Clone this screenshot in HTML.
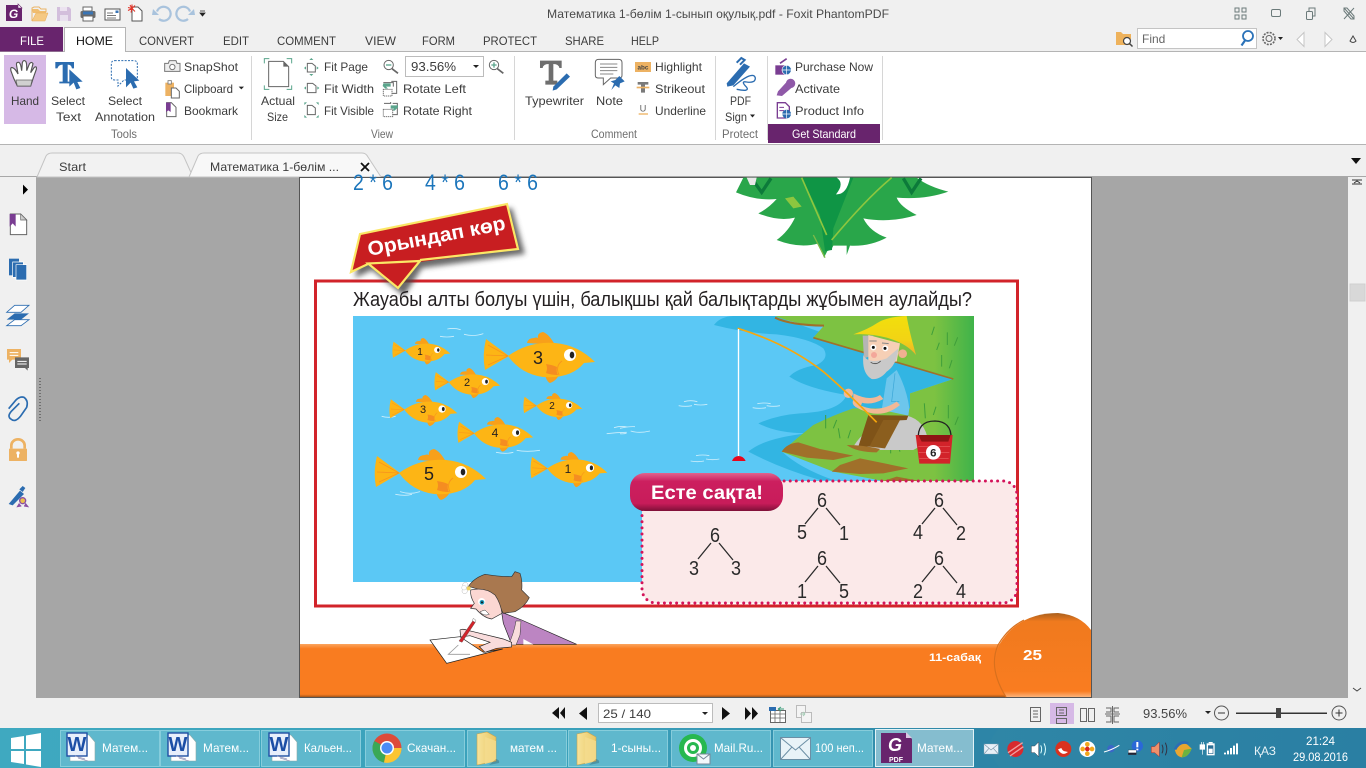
<!DOCTYPE html>
<html><head><meta charset="utf-8"><title>Foxit PhantomPDF</title>
<style>
html,body{margin:0;padding:0;width:1366px;height:768px;overflow:hidden;background:#f0f0f0}
svg{display:block;position:absolute;left:0;top:0}
text{font-family:"Liberation Sans","DejaVu Sans","Noto Sans CJK SC",sans-serif;font-size:12px;fill:#3c3c3c}
.c{text-anchor:middle}
.g{fill:#6e6e6e}
.tb{fill:#fff;font-size:12px}
.d{font-size:20.500px;fill:#2a2a2a}
.fn{fill:#231f20;text-anchor:middle;font-weight:400}
</style></head><body>
<svg width="1366" height="768" viewBox="0 0 1366 768" xmlns="http://www.w3.org/2000/svg">
<defs>
<linearGradient id="tbar" x1="0" x2="1" y1="0" y2="0"><stop offset="0" stop-color="#3fa9c0"/><stop offset=".45" stop-color="#3a9fba"/><stop offset=".72" stop-color="#2f86a6"/><stop offset="1" stop-color="#2a7fa3"/></linearGradient>
<linearGradient id="btn" x1="0" x2="0" y1="0" y2="1"><stop offset="0" stop-color="#e0648f"/><stop offset=".22" stop-color="#cc1f5f"/><stop offset=".8" stop-color="#c81c5a"/><stop offset="1" stop-color="#7e1038"/></linearGradient>
<linearGradient id="grass" x1="0" x2="1" y1="0" y2="0"><stop offset="0" stop-color="#7dc242"/><stop offset=".8" stop-color="#7dc242"/><stop offset="1" stop-color="#3fb34a"/></linearGradient>
<linearGradient id="foot" x1="0" x2="0" y1="0" y2="1"><stop offset="0" stop-color="#fba55f"/><stop offset=".09" stop-color="#f97c20"/><stop offset=".95" stop-color="#f97c20"/><stop offset="1" stop-color="#a5561a"/></linearGradient>
<linearGradient id="circ" x1="0" x2="0" y1="0" y2="1"><stop offset="0" stop-color="#a9601e"/><stop offset=".1" stop-color="#f07a1e"/><stop offset=".93" stop-color="#f97c20"/><stop offset="1" stop-color="#fbb27a"/></linearGradient>
<linearGradient id="hat" x1="0" x2="0" y1="0" y2="1"><stop offset="0" stop-color="#f2df0c"/><stop offset=".6" stop-color="#f2d414"/><stop offset="1" stop-color="#efb02b"/></linearGradient>
<linearGradient id="folder" x1="0" x2="1" y1="0" y2="0"><stop offset="0" stop-color="#f7e39b"/><stop offset="1" stop-color="#e9c765"/></linearGradient>
<filter id="sh" x="-20%" y="-20%" width="140%" height="140%"><feGaussianBlur stdDeviation="2.600"/></filter>
<g id="fish">
<path d="M26,24 L3,7 Q-1,23 2,38 Z" fill="#fdb515"/>
<path d="M25,24 L5,13 M25,24 L3,23 M25,24 L5,33" stroke="#f7941d" stroke-width=".8"/>
<path d="M44,11 Q45,6 51,6 Q53,5 55,6 Q54,1 60,0 Q66,2 72,13 Z" fill="#f8a01a"/>
<path d="M62,43 Q64,50 67,51 Q73,49 76,43 Z" fill="#f8a01a"/>
<path d="M25,24 Q46,9 72,11 Q95,13 112,30 L101,31 Q88,47 60,45 Q38,42 25,24 Z" fill="#fdb515"/>
<path d="M63,32 Q70,33 74,35 Q73,40 75,43 Q68,43 63,41 Q65,36 63,32 Z" fill="#f58d21"/>
<path d="M79,29 Q72,34 76,43" fill="none" stroke="#f7941d" stroke-width=".9"/>
<circle cx="87" cy="23" r="6" fill="#fff"/><ellipse cx="89" cy="23" rx="2.300" ry="3.400" fill="#222"/>
</g>
<g id="word"><path d="M3,3 h19 l6,7 v19 h-25 z" fill="#fff" stroke="#8aa" stroke-width=".6"/><rect x="0" y="1" width="20" height="23" fill="#e7eefb" stroke="#1e4fa3" stroke-width="1.400"/><text x="10" y="19" class="c" style="font-size:20px;font-weight:700;fill:#1c4ea6">W</text><path d="M8,24 l10,3 m-7,-1 l10,3" stroke="#99b" stroke-width=".7"/></g>
<g id="fold"><path d="M2,3 L12,1 L21,6 L21,30 L2,34 Z" fill="url(#folder)" stroke="#c9a44c" stroke-width=".6"/><path d="M10,6 L21,10 L21,30 L10,33 Z" fill="#f5dc8e" opacity=".8"/><path d="M21,28 q4,1 3,4 l-10,2" fill="#000" opacity=".2"/></g>
</defs>

<rect width="1366" height="768" fill="#f0f0f0"/>
<rect x="0" y="52" width="1366" height="92" fill="#fff"/>
<rect x="0" y="51" width="1366" height="1" fill="#b4b4b4"/>
<rect x="0" y="144" width="1366" height="1" fill="#b4b4b4"/>
<rect x="36" y="177" width="1312" height="521" fill="#a6a6a6"/>
<rect x="0" y="176" width="1366" height="1" fill="#a8a8a8"/>

<!-- QAT -->
<path d="M6,5 H18 L22,8.500 V21 H6 Z" fill="#68246d"/><path d="M18,4 l4,4 h-4z" fill="#fff" stroke="#68246d" stroke-width=".6"/>
<text x="13.500" y="18" class="c" style="font-size:12px;font-weight:700;font-style:italic;fill:#fff">G</text>
<path d="M32,9 h6 l2,2 h6 v2 h-13 z" fill="#f0bd6f"/><path d="M32,21 V8 l2,-1 h5 l2,2 h5 v3" fill="none" stroke="#eab466"/><path d="M32,21 l4,-8 h12 l-3,8 z" fill="#f5c983" stroke="#e6ac5b" stroke-width=".5"/>
<path d="M57,7 h12 l2,2 v12 h-14z" fill="#d3bfdc"/><rect x="60" y="7" width="7" height="4" fill="#ece3f0"/><rect x="60" y="15" width="8" height="6" fill="#e8e0ee"/>
<rect x="83" y="7" width="9" height="4" fill="#fff" stroke="#666"/><rect x="80.500" y="11" width="15" height="7" rx="1.500" fill="#6c6c6c"/><rect x="83" y="11.500" width="10" height="3" fill="#3a75b5"/><rect x="83" y="16" width="10" height="5" fill="#fff" stroke="#666"/>
<rect x="105" y="9" width="15" height="11" fill="#fff" stroke="#555"/><path d="M107,13 h6 M107,15.500 h9 M107,18 h9" stroke="#777"/><rect x="115.500" y="10.500" width="3" height="2.500" fill="#3a75b5"/>
<path d="M132,7 h6 l4,4 v10 h-10 z" fill="#fff" stroke="#555"/><path d="M132,8.500 l-4,-1 m4,1 l-2,-3.500 m2,3.500 l0,-4 m0,4 l3,-3 m-3,3 l-4,2 m4,-2 l-1,4 m1,-4 l3,3" stroke="#e1362b" stroke-width="1.100"/>
<path d="M157,11.500 A7,7 0 1 1 159,19" fill="none" stroke="#a9c3dd" stroke-width="2.200"/><path d="M153,9 l6,6 l-7,0z" fill="#a9c3dd"/>
<path d="M190,11.500 A7,7 0 1 0 188,19" fill="none" stroke="#a9c3dd" stroke-width="2.200"/><path d="M194,9 l-6,6 l7,0z" fill="#a9c3dd"/>
<path d="M200,11 h5 M200,13 h5 l-2.500,3z" stroke="#222" fill="#222" stroke-width=".8"/>

<text x="547" y="18" textLength="342" lengthAdjust="spacingAndGlyphs" style="fill:#4a4a4a">Математика 1-бөлім 1-сынып оқулық.pdf - Foxit PhantomPDF</text>
<g fill="none" stroke="#6b7a7a">
<path d="M1235,8 h4 v4 h-4z M1242,8 h4 v4 h-4z M1235,15 h4 v4 h-4z M1242,15 h4 v4 h-4z"/>
<rect x="1271.500" y="9.500" width="9" height="7" rx="1.500"/>
<rect x="1306.500" y="11.500" width="6" height="8" rx="1"/><path d="M1309,11 v-3 h6 v8 h-2"/>
<path d="M1344,8 l10,11 M1354,8 l-10,11 M1344,8 h3 l7,8 v3 h-3 l-7,-8z"/>
</g>

<!-- tabs -->
<rect x="0" y="27" width="63" height="24.500" fill="#68246d"/>
<text x="20" y="45" textLength="24" lengthAdjust="spacingAndGlyphs" style="fill:#fff">FILE</text>
<path d="M64.500,52 V27.500 H125.500 V52" fill="#fff" stroke="#b4b4b4"/><rect x="65" y="50" width="60" height="3" fill="#fff"/>
<text x="76" y="45" textLength="37" lengthAdjust="spacingAndGlyphs" style="fill:#111">HOME</text>
<text x="139" y="45" textLength="55" lengthAdjust="spacingAndGlyphs">CONVERT</text>
<text x="223" y="45" textLength="26" lengthAdjust="spacingAndGlyphs">EDIT</text>
<text x="277" y="45" textLength="59" lengthAdjust="spacingAndGlyphs">COMMENT</text>
<text x="365" y="45" textLength="31" lengthAdjust="spacingAndGlyphs">VIEW</text>
<text x="422" y="45" textLength="33" lengthAdjust="spacingAndGlyphs">FORM</text>
<text x="483" y="45" textLength="54" lengthAdjust="spacingAndGlyphs">PROTECT</text>
<text x="565" y="45" textLength="39" lengthAdjust="spacingAndGlyphs">SHARE</text>
<text x="631" y="45" textLength="28" lengthAdjust="spacingAndGlyphs">HELP</text>

<!-- find -->
<path d="M1116,32 h5 l2,2 h8 v5 h-15z" fill="#eeb25c"/><rect x="1116" y="34" width="14" height="11" fill="#eeb25c"/><circle cx="1127" cy="41" r="3.500" fill="#fff" stroke="#444" stroke-width="1.200"/><path d="M1129.500,43.500 l3,3" stroke="#444" stroke-width="1.500"/>
<rect x="1137.500" y="28.500" width="119" height="20" fill="#fff" stroke="#c4c4c4"/>
<text x="1142" y="43" style="fill:#666">Find</text>
<circle cx="1248" cy="36" r="5" fill="#fff" stroke="#2b72b8" stroke-width="1.800"/><path d="M1245,40.500 l-3.500,5" stroke="#2b72b8" stroke-width="2.200"/>
<circle cx="1269" cy="38.500" r="3" fill="none" stroke="#666"/><circle cx="1269" cy="38.500" r="6" fill="none" stroke="#666" stroke-width="1.600" stroke-dasharray="2 1.200"/>
<path d="M1278,37 h5 l-2.500,3z" fill="#222"/>
<path d="M1304,32.500 l-7,7 l7,7z" fill="#fff" stroke="#c6c6c6"/><path d="M1325,32.500 l7,7 l-7,7z" fill="#fff" stroke="#c6c6c6"/>
<path d="M1350,41 l3,-5 l3,5 q-3,3 -6,0z" fill="none" stroke="#444"/>

<g fill="#d6d6d6"><rect x="251" y="56" width="1" height="84"/><rect x="514" y="56" width="1" height="84"/><rect x="715" y="56" width="1" height="84"/><rect x="767" y="56" width="1" height="84"/><rect x="882" y="56" width="1" height="84"/></g>
<rect x="4" y="55" width="42" height="69" fill="#d6b9e6"/>

<g transform="scale(.33333)">
<path d="M52,258 Q40,235 33,213 Q30,200 38,203 Q46,206 54,222 L50,198 Q47,186 56,187 Q62,188 65,212 L67,188 Q70,178 77,184 Q81,188 80,212 L88,192 Q94,183 99,191 L92,218 L103,202 Q111,197 109,208 Q100,232 92,258 Z" fill="#fff" stroke="#555" stroke-width="3.500"/>
<path d="M52,258 H92 L96,240 H48 Z" fill="#d0d0d0" stroke="#666" stroke-width="2"/>
<path d="M166,186 H222 V205 H216 Q214,194 203,194 V245 H212 V250 H178 V245 H188 V194 Q176,194 172,205 H166 Z" fill="#2b6cb0"/>
<path d="M208,208 L248,245 L232,246 L241,264 L229,268 L221,248 L208,260 Z" fill="#2b6cb0"/>
<path d="M344,182 H402 Q412,182 412,192 V232 Q412,240 402,240 H372 L354,258 V240 H344 Q334,240 334,232 V192 Q334,182 344,182 Z" fill="#fff" stroke="#2b6cb0" stroke-width="3" stroke-dasharray="6 4"/>
<path d="M378,204 L418,242 L402,244 L412,262 L400,266 L392,248 L378,262 Z" fill="#2b6cb0"/>
<path d="M494,190 H505 L508,182 H528 L531,190 H540 V214 H494 Z" fill="#eee" stroke="#777" stroke-width="3"/><circle cx="517" cy="201" r="8" fill="#fff" stroke="#777" stroke-width="3"/>
<rect x="496" y="248" width="26" height="40" fill="#edb263"/><rect x="504" y="242" width="10" height="10" fill="#fff" stroke="#777" stroke-width="2.500"/><path d="M514,264 H528 L538,274 V294 H514 Z" fill="#fff" stroke="#666" stroke-width="3"/>
<path d="M500,308 H514 L528,322 V350 H500 Z" fill="#fff" stroke="#666" stroke-width="3"/><path d="M498,308 H512 V336 L505,331 L498,336 Z" fill="#7a3d92"/>
<path d="M716,260 h16 l-8,8z" fill="#222"/>
<path d="M806,184 H850 L866,200 V260 H806 Z" fill="#fff" stroke="#666" stroke-width="3"/><path d="M850,184 L866,200 H850 Z" fill="#666"/>
<path d="M793,190 V176 H808 M860,176 H875 V190 M793,256 V268 H808 M860,268 H875 V256" fill="none" stroke="#5aa58c" stroke-width="3"/>
<path d="M922,190 H936 L946,198 V216 H922 Z" fill="#fff" stroke="#666" stroke-width="3"/><path d="M928,180 l6,-6 l6,6z M928,222 l6,6 l6,-6z M912,204 l6,-5 v10z M950,199 l6,5 l-6,5z" fill="#5aa58c"/>
<path d="M922,250 H938 L948,258 V278 H922 Z" fill="#fff" stroke="#666" stroke-width="3"/><path d="M912,264 l6,-5 v10z M952,259 l6,5 l-6,5z" fill="#5aa58c"/>
<path d="M922,316 H936 L946,324 V344 H922 Z" fill="#fff" stroke="#666" stroke-width="3"/><path d="M913,307 h8 l-8,8z M956,307 v8 l-8,-8z M913,353 v-8 l8,8z M956,353 h-8 l8,-8z" fill="#5aa58c"/>
<circle cx="1166" cy="195" r="14" fill="#fff" stroke="#666" stroke-width="3"/><rect x="1158" y="193" width="16" height="4" fill="#5aa58c"/><path d="M1176,206 L1194,220" stroke="#666" stroke-width="5"/>
<circle cx="1482" cy="195" r="14" fill="#fff" stroke="#666" stroke-width="3"/><path d="M1474,195 h16 M1482,187 v16" stroke="#5aa58c" stroke-width="4"/><path d="M1492,206 L1510,220" stroke="#666" stroke-width="5"/>
<path d="M1150,248 H1180 V260 M1170,280 h20 v-36 h-16" fill="none" stroke="#666" stroke-width="3"/><path d="M1150,250 h22 v10 h-14 l6,6 h-8 l-8,-8z" fill="#5aa58c"/><path d="M1150,268 h26 v20 h-26z" fill="#fff" stroke="#777" stroke-width="3" stroke-dasharray="4 2"/>
<path d="M1152,310 h20 v-4 M1178,344 h14 v-34 h-14" fill="none" stroke="#666" stroke-width="3"/><path d="M1194,316 h-22 v10 h10 l-6,6 h8 l10,-10z" fill="#5aa58c"/><path d="M1150,328 h28 v22 h-28z" fill="#fff" stroke="#777" stroke-width="3" stroke-dasharray="4 2"/>
</g>
<rect x="405.500" y="56.500" width="78" height="20" fill="#fff" stroke="#bcbcbc"/>
<path d="M473,65 h6 l-3,3z" fill="#222"/>
<text x="411" y="71" textLength="45" lengthAdjust="spacingAndGlyphs" style="font-size:13px">93.56%</text>

<!-- ribbon labels -->
<text x="11" y="105" textLength="28" lengthAdjust="spacingAndGlyphs">Hand</text>
<text x="51" y="105" textLength="34" lengthAdjust="spacingAndGlyphs">Select</text><text x="56" y="121" textLength="25" lengthAdjust="spacingAndGlyphs">Text</text>
<text x="108" y="105" textLength="34" lengthAdjust="spacingAndGlyphs">Select</text><text x="95" y="121" textLength="60" lengthAdjust="spacingAndGlyphs">Annotation</text>
<text x="184" y="71" textLength="54" lengthAdjust="spacingAndGlyphs">SnapShot</text>
<text x="184" y="93" textLength="49" lengthAdjust="spacingAndGlyphs">Clipboard</text>
<text x="184" y="115" textLength="54" lengthAdjust="spacingAndGlyphs">Bookmark</text>
<text x="111" y="138" textLength="26" lengthAdjust="spacingAndGlyphs" class="g">Tools</text>
<text x="261" y="105" textLength="34" lengthAdjust="spacingAndGlyphs">Actual</text><text x="267" y="121" textLength="21" lengthAdjust="spacingAndGlyphs">Size</text>
<text x="324" y="71" textLength="44" lengthAdjust="spacingAndGlyphs">Fit Page</text>
<text x="324" y="93" textLength="50" lengthAdjust="spacingAndGlyphs">Fit Width</text>
<text x="324" y="115" textLength="50" lengthAdjust="spacingAndGlyphs">Fit Visible</text>
<text x="403" y="93" textLength="63" lengthAdjust="spacingAndGlyphs">Rotate Left</text>
<text x="403" y="115" textLength="69" lengthAdjust="spacingAndGlyphs">Rotate Right</text>
<text x="371" y="138" textLength="22" lengthAdjust="spacingAndGlyphs" class="g">View</text>
<text x="525" y="105" textLength="59" lengthAdjust="spacingAndGlyphs">Typewriter</text>
<text x="596" y="105" textLength="27" lengthAdjust="spacingAndGlyphs">Note</text>
<text x="655" y="71" textLength="47" lengthAdjust="spacingAndGlyphs">Highlight</text>
<text x="655" y="93" textLength="50" lengthAdjust="spacingAndGlyphs">Strikeout</text>
<text x="655" y="115" textLength="51" lengthAdjust="spacingAndGlyphs">Underline</text>
<text x="591" y="138" textLength="46" lengthAdjust="spacingAndGlyphs" class="g">Comment</text>
<text x="730" y="105" textLength="21" lengthAdjust="spacingAndGlyphs">PDF</text><text x="725" y="121" textLength="22" lengthAdjust="spacingAndGlyphs">Sign</text>
<path d="M750,114.500 h5 l-2.500,3z" fill="#222"/>
<text x="722" y="138" textLength="36" lengthAdjust="spacingAndGlyphs" class="g">Protect</text>
<text x="795" y="71" textLength="78" lengthAdjust="spacingAndGlyphs">Purchase Now</text>
<text x="795" y="93" textLength="45" lengthAdjust="spacingAndGlyphs">Activate</text>
<text x="795" y="115" textLength="69" lengthAdjust="spacingAndGlyphs">Product Info</text>
<rect x="768" y="124" width="112" height="19" fill="#68246d"/>
<text x="792" y="138" textLength="64" lengthAdjust="spacingAndGlyphs" style="fill:#fff">Get Standard</text>

<g transform="translate(520,50) scale(.33333)">
<path d="M60,32 H125 V54 H118 Q116,42 100,42 V92 H112 V104 H76 V92 H86 V42 Q70,42 68,54 H60 Z" fill="#6e6e6e"/>
<path d="M100,110 L140,70 L150,80 L110,118 L98,122 Z" fill="#2b6cb0"/>
<path d="M236,28 H296 Q306,28 306,38 V76 Q306,84 296,84 H272 L250,104 V84 H236 Q226,84 226,76 V38 Q226,28 236,28 Z" fill="#fff" stroke="#666" stroke-width="3"/>
<path d="M240,42 H292 M240,52 H292 M240,62 H292 M240,72 H280" stroke="#888" stroke-width="3"/>
<path d="M298,78 L314,94 L300,100 L298,114 L286,106 L274,120 L282,100 L272,94 L286,90 Z" fill="#2b6cb0"/>
<rect x="345" y="36" width="48" height="30" fill="#edb263"/><text x="369" y="58" class="c" style="font-size:19px;font-weight:700;fill:#444">abc</text>
<path d="M353,96 H385 V104 H375 V128 H363 V104 H353 Z" fill="#7a7a7a"/><rect x="350" y="110" width="38" height="5" fill="#edb263"/>
<text x="369" y="184" class="c" style="font-size:28px;fill:#666">U</text><rect x="356" y="190" width="28" height="4" fill="#edb263"/>
<path d="M620,100 L672,40 L690,50 L640,106 L622,110 Z" fill="#2b6cb0"/><path d="M650,38 L664,24 L674,30 L660,44" fill="none" stroke="#2b6cb0" stroke-width="6"/>
<path d="M640,110 Q700,60 706,84 Q706,100 680,96 Q660,92 680,112 Q690,126 650,118" fill="none" stroke="#2b6cb0" stroke-width="4"/>
<path d="M766,46 h40 v28 h-40z" fill="#7a3d92"/><path d="M780,40 L800,26" stroke="#7a3d92" stroke-width="5"/><circle cx="800" cy="60" r="14" fill="#2b6cb0" stroke="#fff" stroke-width="2"/><path d="M786,60 h28 M800,46 v28" stroke="#fff" stroke-width="2"/>
<path d="M770,136 l4,-12 l24,-26 a14,14 0 1 1 16,16 l-28,24z" fill="#8f59a8"/>
<path d="M772,158 h24 l12,12 v12 h-10 v22 h-26z" fill="#fff" stroke="#7a3d92" stroke-width="4"/><path d="M778,172 h14 M778,182 h14" stroke="#7a3d92" stroke-width="3"/><circle cx="800" cy="192" r="13" fill="#2b6cb0"/><path d="M787,192 h26 M800,179 v26" stroke="#fff" stroke-width="2"/>
</g>

<!-- doc tabs -->
<path d="M37,177 L46,156 Q48,153 52,153 H178 Q182,153 184,157 L193,177 Z" fill="#f2f2f2" stroke="#c4c4c4"/>
<path d="M189,177 L198,156 Q200,153 204,153 H362 Q366,153 368,157 L381,177 Z" fill="#f8f8f8" stroke="#c4c4c4"/>
<text x="59" y="171" textLength="27" lengthAdjust="spacingAndGlyphs">Start</text>
<text x="210" y="171" textLength="129" lengthAdjust="spacingAndGlyphs">Математика 1-бөлім ...</text>
<path d="M361,163 l8,8 M369,163 l-8,8" stroke="#111" stroke-width="1.800"/>
<path d="M1351,158 h10 l-5,6z" fill="#111"/>

<!-- left icons -->
<g transform="translate(0,170) scale(.33333)">
<path d="M69,44 L84,59 L69,74 Z" fill="#000"/>
<path d="M31,132 H62 L80,150 V194 H31 Z" fill="#fff" stroke="#666" stroke-width="3"/><path d="M62,132 L80,150 H62 Z" fill="#ccc" stroke="#666" stroke-width="2"/><path d="M29,132 H47 V170 L38,160 L29,170 Z" fill="#7a3d92"/>
<path d="M27,266 h30 v50 h-30z" fill="#2b6cb0"/><path d="M38,276 h32 v46 h-32z" fill="#2b6cb0" stroke="#fff" stroke-width="2"/><path d="M48,284 h32 v46 h-32z" fill="#2b6cb0" stroke="#fff" stroke-width="2"/>
<path d="M20,427 L44,406 H87 L63,427 Z" fill="#fff" stroke="#2b6cb0" stroke-width="2.500"/>
<path d="M20,449 L44,430 H87 L63,449 Z" fill="#2b6cb0"/>
<path d="M20,467 L44,449 H87 L63,467 Z" fill="#fff" stroke="#2b6cb0" stroke-width="2.500"/>
<path d="M21,537 h42 v32 h-26 l-10,10 v-10 h-6z" fill="#edb263"/><path d="M29,548 h26 M29,556 h26" stroke="#fff" stroke-width="3"/>
<path d="M45,562 h42 v32 h-4 v8 l-8,-8 h-30z" fill="#666"/><path d="M52,574 h28 M52,582 h28" stroke="#fff" stroke-width="3"/>
<path d="M58,700 L34,724 Q20,740 34,748 Q46,758 62,738 L80,712 Q86,692 72,682 Q60,678 48,690 L26,716" fill="none" stroke="#2b6cb0" stroke-width="5"/>
<path d="M34,836 V826 a20,18 0 0 1 40,0 V836" fill="none" stroke="#edb263" stroke-width="8"/><rect x="27" y="836" width="54" height="37" rx="2" fill="#edb263"/><circle cx="54" cy="849" r="5" fill="#fff"/><rect x="51" y="850" width="6" height="13" fill="#fff"/>
<path d="M26,1002 L60,962 L72,972 L38,1006 Z" fill="#2b6cb0"/><path d="M58,958 L68,948 L76,954 L68,966z" fill="#2b6cb0"/>
<circle cx="68" cy="992" r="9" fill="#edc04a" stroke="#8a4fa3" stroke-width="4"/><path d="M58,1000 L52,1010 L64,1008 M76,1000 L84,1010 L72,1008" fill="#8a4fa3" stroke="#8a4fa3" stroke-width="3"/>
</g>
<path d="M40,378 v44" stroke="#6f6f6f" stroke-width="2" stroke-dasharray="1 2"/>

<!-- scrollbar -->
<rect x="1348" y="177" width="18" height="521" fill="#f0f0f0"/>
<path d="M1352,180 h10 M1354,183 l3,-2 l3,2 M1352,184 h10" stroke="#333" fill="none"/>
<rect x="1350" y="284" width="15" height="17" fill="#d8d8d8" stroke="#cfcfcf"/>
<path d="M1353,688 l4,3 l4,-3" fill="none" stroke="#444"/>

<!-- PAGE -->
<rect x="299.500" y="177.500" width="792" height="520" fill="#fff" stroke="#555"/>
<text x="353" y="190" textLength="40" lengthAdjust="spacingAndGlyphs" style="font-size:22px;fill:#1b75bb">2 * 6</text>
<text x="425" y="190" textLength="40" lengthAdjust="spacingAndGlyphs" style="font-size:22px;fill:#1b75bb">4 * 6</text>
<text x="498" y="190" textLength="40" lengthAdjust="spacingAndGlyphs" style="font-size:22px;fill:#1b75bb">6 * 6</text>

<!-- leaves -->
<g transform="translate(620,175) scale(.33333)">
<path d="M370,8 L348,52 Q410,78 470,72 Q445,100 415,115 Q475,140 525,128 Q505,170 470,195 Q540,222 595,205 L612,248 L622,228 Q635,225 640,212 L680,212 L680,240 L690,212 Q750,215 800,188 Q750,170 730,130 Q810,145 890,120 Q840,95 830,68 Q915,75 985,50 Q925,35 890,8 Z" fill="#29a64a"/>
<path d="M545,8 L600,120 L615,228 L636,225 L640,160 L700,8 Z" fill="#0f9545"/>
<path d="M650,8 Q675,25 648,58 Q680,60 690,8 Z" fill="#fff"/>
<path d="M395,10 l30,42 l28,-42 M850,10 l25,42 l28,-42" fill="none" stroke="#0c7a3a" stroke-width="10"/>
<path d="M545,8 L620,180 M815,8 Q740,70 635,195" fill="none" stroke="#8dc63f" stroke-width="5"/>
<path d="M495,70 L520,100 L545,95 L520,65 Z" fill="#8dc63f"/>
<path d="M615,248 L580,180" stroke="#7dba48" stroke-width="4"/>
<path d="M380,8 h30 l-5,22 h-15z" fill="#e8e8e8"/>
</g>

<rect x="315.500" y="281" width="702" height="325" fill="none" stroke="#d2232a" stroke-width="3"/>

<!-- tag -->
<path d="M364,238 L512,208 L525,254 L422,268 L404,296 L372,270 L355,278 Z" fill="#444" opacity=".8" filter="url(#sh)"/>
<path d="M360,234 L507,204 L518,249 L420,262 L398,288 L368,264 L351,272 Z" fill="#c81e21"/>
<path d="M368,264 L351,272 L360,234 L507,204 L518,249 L420,260" fill="none" stroke="#fbe766" stroke-width="2.200"/>
<path d="M368,263.500 L420,261 L398,288 Z" fill="#c81e21" stroke="#fbe766" stroke-width="2.200"/>
<text transform="translate(369,256) rotate(-11)" textLength="140" lengthAdjust="spacingAndGlyphs" style="font-size:20px;font-weight:700;fill:#fff">Орындап көр</text>

<text x="353" y="306" textLength="619" lengthAdjust="spacingAndGlyphs" style="font-size:20.500px;fill:#231f20">Жауабы алты болуы үшін, балықшы қай балықтарды жұбымен аулайды?</text>

<rect x="353" y="316" width="621" height="266" fill="#5bc8f5"/>
<g transform="translate(620,175) scale(.33333)">
<path d="M282,450 Q300,425 340,423 H465 L1000,612 L870,655 L870,720 L640,760 L560,800 L486,830 Q540,880 640,915 L600,915 Q480,880 385,830 Q430,790 560,775 Q470,775 415,745 Q470,720 540,715 Q660,710 680,660 Q560,640 508,605 Q530,580 590,570 Q630,550 610,520 Q570,490 470,478 Q380,475 282,450 Z" fill="#32b5e3"/>
<path d="M465,423 H1062 V918 H790 Q720,905 640,890 L485,830 Q530,790 580,750 Q640,720 700,700 L870,700 L870,655 L1000,612 L580,488 L612,452 Q530,450 465,423 Z" fill="url(#grass)"/>
<path d="M465,428 Q510,450 612,452" fill="none" stroke="#a0702a" stroke-width="6"/>
<path d="M580,488 L1000,612" stroke="#a0702a" stroke-width="5"/>
<path d="M485,830 Q500,805 535,802 L600,822 L700,842 L640,855 L560,848 Z" fill="#a0702a"/>
<path d="M635,890 L660,870 L720,850 L865,880 L790,895 L720,897 Z" fill="#a0702a"/>
<path d="M790,918 L830,905 L900,918 Z" fill="#a0702a"/>
<g stroke="#3f9e3a" stroke-width="3" fill="none"><path d="M935,480 l8,-25 M950,525 l8,-22 M982,510 l0,-38 M1003,512 l10,-25 M965,575 l0,-35 M988,580 l8,-25 M617,760 l0,-40 M640,760 l10,-25 M660,790 l-5,-30 M684,790 l8,-25 M812,835 l0,-30 M840,830 l-8,-25 M916,730 l-3,-45 M940,720 l8,-25 M985,730 l0,-40 M1005,750 l10,-25"/></g>
<path d="M700,815 Q745,740 860,722 Q915,735 925,800 L880,825 L780,825 Z" fill="#c9c9c9"/>
<path d="M745,720 L865,722 L860,735 L800,738 L760,815 L715,815 Z" fill="#7f5318"/>
<path d="M790,735 L840,735 L795,820 L748,815 Z" fill="#8b5e1e"/>
<path d="M680,810 Q730,810 780,822 L770,832 Q710,832 680,810Z" fill="#a0702a"/>
<path d="M800,610 L830,585 Q860,640 868,700 L865,722 L785,705 Z" fill="#6dc6ec"/>
<path d="M825,595 L815,680 L838,680" fill="none" stroke="#3aa5d6" stroke-width="2"/>
<path d="M700,655 Q750,680 780,660 L790,672 Q740,700 700,670 Z" fill="#f2b896"/>
<path d="M710,685 Q770,720 830,680 L840,690 Q780,740 705,695 Z" fill="#f2b896"/>
<circle cx="685" cy="655" r="14" fill="#f2b896"/><circle cx="712" cy="682" r="14" fill="#f2b896"/>
<circle cx="848" cy="536" r="13" fill="#f0b090"/>
<path d="M728,482 H760 V540 L732,550 Z" fill="#b5b5b5"/>
<path d="M745,480 L840,505 L830,560 L745,560 Z" fill="#f6cfb5"/>
<path d="M730,540 Q745,570 800,550 L835,520 Q830,570 800,590 Q780,615 755,612 Q725,595 730,540 Z" fill="#c9c9c9"/>
<path d="M752,562 Q768,572 782,558" fill="none" stroke="#444" stroke-width="2.500"/>
<circle cx="762" cy="540" r="9" fill="#f3a79a"/>
<circle cx="760" cy="517" r="9" fill="#fff"/><circle cx="760" cy="517" r="4.500" fill="#111"/><circle cx="796" cy="520" r="9" fill="#fff"/><circle cx="795" cy="520" r="4.500" fill="#111"/>
<path d="M748,498 l22,0 M786,504 l20,2" stroke="#888" stroke-width="3"/>
<path d="M700,478 Q745,462 770,445 Q800,425 860,423 Q868,470 888,540 Q860,505 800,488 Q750,475 700,478 Z" fill="url(#hat)"/>
<path d="M353,460 Q500,505 610,590 Q680,650 770,742" fill="none" stroke="#f7a70c" stroke-width="5"/>
<rect x="353.500" y="462" width="4" height="383" fill="#fff"/>
<path d="M336,858 Q342,843 356,843 Q370,843 377,858 Z" fill="#e8061c"/>
<path d="M895,796 Q890,738 945,738 Q995,740 993,790" fill="none" stroke="#222" stroke-width="4"/>
<path d="M887,780 H998 L990,866 H898 Z" fill="#d2232a"/>
<path d="M895,780 H992 L985,800 H905 Z" fill="#8e1414"/>
<path d="M895,815 H990 M896,832 H988 M898,850 H986" stroke="#e86060" stroke-width="2"/>
<circle cx="940" cy="832" r="22" fill="#fff"/>
<text x="940" y="844" class="c" style="font-size:34px;font-weight:700;fill:#222">6</text>
<g fill="none" stroke="#cdeefb" stroke-width="2.500"><path d="M192,680 q20,-6 40,0 M176,692 q20,4 40,0 M222,688 q20,4 40,0 M412,686 q20,-4 40,0 M398,698 q20,4 40,0 M440,692 q20,4 40,0 M0,760 q25,-6 45,-5 M0,776 q10,2 20,-2 M32,768 q25,8 58,0 M228,842 q20,-4 40,0 M212,858 q20,4 40,0 M258,852 q20,4 40,0"/></g>
</g>
<g transform="translate(300,175) scale(.33333)" fill="none" stroke="#cdeefb" stroke-width="2.500">
<path d="M442,462 q20,-4 40,2 M420,484 q20,4 42,0 M492,478 q30,8 58,-2 M245,724 q20,6 42,0 M588,832 q30,6 52,0 M650,826 q30,6 70,0 M942,758 q20,-6 40,-2 M920,776 q30,-4 60,-4 M300,950 q30,10 60,0 M286,958 q30,6 50,0"/>
</g>

<use href="#fish" transform="translate(483,332)"/>
<use href="#fish" transform="translate(392,338) scale(.52)"/>
<use href="#fish" transform="translate(434,368) scale(.59)"/>
<use href="#fish" transform="translate(389,395) scale(.61)"/>
<use href="#fish" transform="translate(523,393) scale(.53)"/>
<use href="#fish" transform="translate(457,417) scale(.68)"/>
<use href="#fish" transform="translate(374,449)"/>
<use href="#fish" transform="translate(530,452) scale(.69)"/>
<text x="538" y="364" class="fn" style="font-size:18px">3</text>
<text x="420" y="355" class="fn" style="font-size:10px">1</text>
<text x="467" y="386" class="fn" style="font-size:11px">2</text>
<text x="423" y="413" class="fn" style="font-size:11px">3</text>
<text x="552" y="409" class="fn" style="font-size:10px">2</text>
<text x="495" y="437" class="fn" style="font-size:12px">4</text>
<text x="429" y="480" class="fn" style="font-size:18px">5</text>
<text x="568" y="473" class="fn" style="font-size:12px">1</text>

<!-- pink box -->
<rect x="642" y="481" width="375" height="122" rx="14" fill="#fbe9e9"/>
<rect x="642" y="481" width="375" height="122" rx="14" fill="none" stroke="#d4145a" stroke-width="3" stroke-linecap="round" stroke-dasharray="0 6.100"/>
<rect x="630" y="473" width="153" height="38" rx="15" fill="url(#btn)"/>
<text x="651" y="499" textLength="112" lengthAdjust="spacingAndGlyphs" style="font-size:19px;font-weight:700;fill:#fff">Есте сақта!</text>

<g stroke="#2a2a2a" stroke-width="1.300" fill="none">
<path d="M711,543 L698,559 M719,543 L733,560"/>
<path d="M818,508 L805,524 M826,508 L840,525"/>
<path d="M935,508 L922,524 M943,508 L957,525"/>
<path d="M818,566 L805,582 M826,566 L840,583"/>
<path d="M935,566 L922,582 M943,566 L957,583"/>
</g>
<text x="710" y="542" textLength="10" lengthAdjust="spacingAndGlyphs" class="d">6</text><text x="689" y="575" textLength="10" lengthAdjust="spacingAndGlyphs" class="d">3</text><text x="731" y="575" textLength="10" lengthAdjust="spacingAndGlyphs" class="d">3</text>
<text x="817" y="507" textLength="10" lengthAdjust="spacingAndGlyphs" class="d">6</text><text x="797" y="539" textLength="10" lengthAdjust="spacingAndGlyphs" class="d">5</text><text x="839" y="540" textLength="10" lengthAdjust="spacingAndGlyphs" class="d">1</text>
<text x="934" y="507" textLength="10" lengthAdjust="spacingAndGlyphs" class="d">6</text><text x="913" y="539" textLength="10" lengthAdjust="spacingAndGlyphs" class="d">4</text><text x="956" y="540" textLength="10" lengthAdjust="spacingAndGlyphs" class="d">2</text>
<text x="817" y="565" textLength="10" lengthAdjust="spacingAndGlyphs" class="d">6</text><text x="797" y="598" textLength="10" lengthAdjust="spacingAndGlyphs" class="d">1</text><text x="839" y="598" textLength="10" lengthAdjust="spacingAndGlyphs" class="d">5</text>
<text x="934" y="565" textLength="10" lengthAdjust="spacingAndGlyphs" class="d">6</text><text x="913" y="598" textLength="10" lengthAdjust="spacingAndGlyphs" class="d">2</text><text x="956" y="598" textLength="10" lengthAdjust="spacingAndGlyphs" class="d">4</text>

<!-- footer -->
<rect x="300" y="644" width="791" height="53" fill="url(#foot)"/>
<path d="M1006,697 Q990,668 999,645 Q1018,613 1058,613 Q1080,615 1091,630 V697 Z" fill="url(#circ)"/>
<path d="M1006,697 Q988,668 998,645 Q1008,628 1024,620" fill="none" stroke="#d8701d" stroke-width="1.200"/>
<text x="929" y="661" textLength="52" lengthAdjust="spacingAndGlyphs" style="font-size:11px;font-weight:700;fill:#fff">11-сабақ</text>
<text x="1023" y="660" textLength="19" lengthAdjust="spacingAndGlyphs" style="font-size:15px;font-weight:700;fill:#fff">25</text>

<!-- girl -->
<g transform="translate(440,565) scale(.33333)">
<path d="M185,142 L190,175 L215,238 L410,238 L245,165 Z" fill="#bc85c2" stroke="#222" stroke-width="2"/>
<path d="M250,222 L280,238 H250 Z" fill="#fff"/>
<path d="M228,168 L243,168 L240,210 L228,240 L205,240 Q222,205 228,168 Z" fill="#f9dcdc" stroke="#333" stroke-width="1.500"/>
<path d="M-30,225 L20,295 L188,252 L130,262 L60,215 Z" fill="#fff" stroke="#222" stroke-width="2"/>
<path d="M55,240 L25,268 H90" fill="none" stroke="#999" stroke-width="2.500"/>
<path d="M60,195 Q68,190 82,196 L100,200 L190,222 L215,232 V246 L170,250 L135,262 L118,245 L150,232 L90,212 L62,216 Z" fill="#f9dcdc" stroke="#222" stroke-width="2"/>
<path d="M100,165 L106,172 L66,232 L57,228 Z" fill="#d2232a" stroke="#444" stroke-width="1"/><path d="M100,160 l8,6 l-3,6 l-8,-5z" fill="#fff" stroke="#444" stroke-width="1"/>
<path d="M85,65 Q100,40 135,28 Q175,35 215,35 L225,20 L240,25 Q248,50 245,75 L268,98 Q255,125 225,140 L190,145 L165,100 Q120,70 85,65 Z" fill="#a9784f" stroke="#333" stroke-width="2"/>
<path d="M92,75 Q135,65 165,90 Q182,115 186,145 L155,162 Q130,158 108,132 L92,130 L103,115 Q90,95 92,75 Z" fill="#fbd7d2" stroke="#333" stroke-width="2"/>
<circle cx="125" cy="110" r="11" fill="#fff"/><circle cx="126" cy="112" r="7" fill="#1e97b8"/><circle cx="126" cy="112" r="3" fill="#111"/>
<path d="M120,140 Q130,155 148,148 L135,135 Z" fill="#fff" stroke="#333" stroke-width="1.500"/>
<circle cx="76" cy="60" r="8" fill="#fff" stroke="#999"/><circle cx="74" cy="78" r="8" fill="#fff" stroke="#999"/><circle cx="86" cy="70" r="6" fill="#f0d15c"/><circle cx="72" cy="68" r="7" fill="#fff" stroke="#aaa"/>
</g>

<!-- status bar -->
<g fill="#111">
<path d="M559,707 v12 l-7,-6z M565,707 v12 l-5,-6z"/>
<path d="M587,707 v13 l-8,-6.500z"/>
<path d="M722,707 v13 l8,-6.500z"/>
<path d="M745,707 v13 l6,-6.500z M752,707 v13 l6,-6.500z"/>
</g>
<rect x="598.500" y="703.500" width="114" height="19" fill="#fff" stroke="#bcbcbc"/>
<text x="603" y="718" textLength="48" lengthAdjust="spacingAndGlyphs">25 / 140</text>
<path d="M702,712 h6 l-3,3z" fill="#222"/>
<g stroke="#666" fill="#fff"><rect x="770.500" y="710.500" width="15" height="12"/><path d="M771,714 h14 M771,718 h14 M775,711 v11 M780,711 v11" stroke-width=".8"/></g>
<path d="M769,707 h7 v4 h-7z" fill="#2b6cb0"/><path d="M778,709 h6 m-6,0 l3,-2 m-3,2 l3,2" stroke="#3a9c7a"/>
<g stroke="#bbb" fill="#f4f4f4"><rect x="796.500" y="705.500" width="9" height="12"/><rect x="801.500" y="712.500" width="10" height="10"/></g>
<path d="M800,714 h5 m0,0 l-2,-2 m2,2 l-2,2" stroke="#a8cdb8"/>

<rect x="1050" y="703" width="24" height="21" fill="#d6b9e6"/>
<g fill="none" stroke="#666">
<rect x="1030.500" y="707.500" width="10" height="14"/><path d="M1033,711 h5 M1033,714 h5 M1033,717 h5"/>
<rect x="1056.500" y="707.500" width="10" height="8"/><rect x="1056.500" y="718.500" width="10" height="5"/><path d="M1059,710 h5 M1059,713 h5"/>
<rect x="1080.500" y="708.500" width="6" height="13"/><rect x="1088.500" y="708.500" width="6" height="13"/>
<path d="M1106,708 h5 v4 h-5 M1119,708 h-5 v4 h5 M1106,722 h5 v-6 h-5 M1119,722 h-5 v-6 h5 M1112.500,706 v18 M1105,714 h15"/>
</g>
<text x="1143" y="718" textLength="44" lengthAdjust="spacingAndGlyphs" style="font-size:13px;fill:#444">93.56%</text>
<path d="M1205,711 h6 l-3,3z" fill="#222"/>
<circle cx="1221.500" cy="713" r="7" fill="none" stroke="#555"/><path d="M1218,713 h7" stroke="#333"/>
<rect x="1236" y="712.500" width="91" height="1.500" fill="#333"/><rect x="1276" y="708" width="5" height="10" fill="#444"/>
<circle cx="1339" cy="713" r="7" fill="none" stroke="#555"/><path d="M1335.500,713 h7 M1339,709.500 v7" stroke="#333"/>

<!-- taskbar -->
<rect x="0" y="728" width="1366" height="40" fill="url(#tbar)"/>
<path d="M1000,728 Q980,745 1000,768 H970 V728 Z" fill="#2a84a8" opacity=".35"/>
<g fill="#fff"><path d="M11,738 L24,736 V749 H11 Z M26,735.500 L41,733 V749 H26 Z M11,751 H24 V764 L11,762 Z M26,751 H41 V767 L26,764.500 Z"/></g>
<g fill="#5fb8cd" stroke="#8dd0de" stroke-opacity=".9">
<rect x="60.500" y="730.500" width="99" height="36"/>
<rect x="160.500" y="730.500" width="99" height="36"/>
<rect x="261.500" y="730.500" width="99" height="36"/>
<rect x="365.500" y="730.500" width="99" height="36"/>
<rect x="467.500" y="730.500" width="99" height="36"/>
<rect x="568.500" y="730.500" width="99" height="36"/>
<rect x="671.500" y="730.500" width="99" height="36"/>
<rect x="773.500" y="730.500" width="99" height="36"/>
</g>
<rect x="875.500" y="729.500" width="98" height="37" fill="#85bdcf" stroke="#e3f3f7"/>
<use href="#word" transform="translate(67,732)"/>
<use href="#word" transform="translate(168,732)"/>
<use href="#word" transform="translate(269,732)"/>
<circle cx="387" cy="748" r="14.500" fill="#dd4b39"/>
<path d="M387,748 L374.500,741 A14.500,14.500 0 0 0 384,762.500 Z" fill="#3aa856"/>
<path d="M387,748 L401.500,748 A14.500,14.500 0 0 1 384,762.500 Z" fill="#fbc531"/>
<circle cx="387" cy="748" r="7" fill="#fff"/><circle cx="387" cy="748" r="5.500" fill="#4c8bf5"/>
<use href="#fold" transform="translate(475,731)"/>
<use href="#fold" transform="translate(575,731)"/>
<circle cx="693" cy="748" r="14" fill="#27b84f"/><circle cx="693" cy="748" r="9" fill="#fff"/><circle cx="693" cy="748" r="6" fill="#27b84f"/><circle cx="693" cy="748" r="3" fill="#fff"/>
<rect x="697" y="754" width="13" height="10" fill="#f3f8fb" stroke="#789"/><path d="M697,754 l6.500,5 l6.500,-5" fill="none" stroke="#789"/>
<rect x="780.500" y="737.500" width="30" height="22" fill="#e9f3f8" stroke="#6c8fa5"/><path d="M781,738 L795.500,750 L810,738 M781,759 L792,747 M810,759 L799,747" fill="none" stroke="#6c8fa5"/>
<path d="M881,733 H906 L912,739 V763 H881 Z" fill="#68246d"/><path d="M906,732 l6,6 h-6z" fill="#d9c7e2"/>
<text x="895" y="751" class="c" style="font-size:18px;font-weight:700;font-style:italic;fill:#fff">G</text>
<text x="896" y="762" class="c" style="font-size:7px;fill:#fff;font-weight:700">PDF</text>
<text x="102" y="752" class="tb" textLength="46" lengthAdjust="spacingAndGlyphs">Матем...</text>
<text x="203" y="752" class="tb" textLength="46" lengthAdjust="spacingAndGlyphs">Матем...</text>
<text x="304" y="752" class="tb" textLength="48" lengthAdjust="spacingAndGlyphs">Кальен...</text>
<text x="407" y="752" class="tb" textLength="49" lengthAdjust="spacingAndGlyphs">Скачан...</text>
<text x="510" y="752" class="tb" textLength="47" lengthAdjust="spacingAndGlyphs">матем ...</text>
<text x="611" y="752" class="tb" textLength="50" lengthAdjust="spacingAndGlyphs">1-сыны...</text>
<text x="714" y="752" class="tb" textLength="49" lengthAdjust="spacingAndGlyphs">Mail.Ru...</text>
<text x="815" y="752" class="tb" textLength="49" lengthAdjust="spacingAndGlyphs">100 неп...</text>
<text x="917" y="752" class="tb" textLength="46" lengthAdjust="spacingAndGlyphs">Матем...</text>

<!-- tray -->
<g transform="translate(980,730) scale(.33333)">
<rect x="12" y="42" width="43" height="30" fill="#e7f0f7" stroke="#9ab"/><path d="M12,42 L33,60 L55,42 M12,72 L27,55 M55,72 L40,55" fill="none" stroke="#7a95a8" stroke-width="2"/>
<circle cx="106" cy="57" r="24" fill="#d82a2e"/><path d="M84,68 L128,38 M90,78 L130,50" stroke="#f0a0a0" stroke-width="4"/>
<path d="M154,48 h10 l12,-12 v44 l-12,-12 h-10z" fill="#fff" stroke="#345" stroke-width="1.500"/><path d="M182,46 q6,11 0,24 M192,40 q9,17 0,36" fill="none" stroke="#dff" stroke-width="3"/>
<circle cx="250" cy="57" r="24" fill="#d9321f"/><path d="M234,58 q12,22 30,8 l-8,-2 q-8,0 -12,-10z" fill="#fff"/>
<circle cx="322" cy="57" r="24" fill="#fff"/><circle cx="322" cy="43" r="7" fill="#f2a81d"/><circle cx="308" cy="57" r="7" fill="#f2a81d"/><circle cx="336" cy="57" r="7" fill="#f2a81d"/><circle cx="322" cy="71" r="7" fill="#f2a81d"/><circle cx="322" cy="57" r="7" fill="#d8261f"/>
<circle cx="393" cy="56" r="11" fill="#3a66c8"/><path d="M372,66 Q395,60 418,46" fill="none" stroke="#fff" stroke-width="3"/>
<circle cx="472" cy="48" r="17" fill="#2a68d8"/><rect x="469" y="36" width="6" height="16" fill="#fff"/><rect x="469" y="56" width="6" height="5" fill="#fff"/><rect x="445" y="60" width="24" height="14" fill="#fff" stroke="#234"/><rect x="445" y="68" width="24" height="6" fill="#223"/>
<path d="M514,50 h10 l14,-14 v44 l-14,-12 h-10z" fill="#f0906a" stroke="#a33" stroke-width="1.500"/><path d="M546,44 q6,13 0,26 M556,38 q9,19 0,38" fill="none" stroke="#334" stroke-width="3"/>
<path d="M585,62 Q590,40 612,34 L635,56 Q625,82 605,82 Q590,80 585,62 Z" fill="#e9a630"/><path d="M585,58 Q600,30 625,40" fill="none" stroke="#2d6db5" stroke-width="8"/><path d="M612,60 L635,56 Q625,82 605,82 Z" fill="#6cb33f"/>
<path d="M660,44 h14 v14 h-14z M664,36 v8 M670,36 v8 M667,58 v16" fill="#fff" stroke="#fff" stroke-width="2"/><rect x="680" y="40" width="24" height="36" fill="#fff"/><rect x="686" y="36" width="12" height="4" fill="#fff"/><rect x="684" y="46" width="16" height="26" fill="#2a6d94"/><rect x="686" y="56" width="12" height="14" fill="#fff"/>
<path d="M732,68 h6 v5 h-6z M741,62 h6 v11 h-6z M750,54 h6 v19 h-6z M759,47 h6 v26 h-6z M768,40 h6 v33 h-6z" fill="#fff"/>
</g>
<text x="1254" y="755" class="tb" textLength="22" lengthAdjust="spacingAndGlyphs" style="fill:#e8f3f7">ҚАЗ</text>
<text x="1306" y="745" class="tb" textLength="29" lengthAdjust="spacingAndGlyphs">21:24</text>
<text x="1293" y="761" class="tb" textLength="55" lengthAdjust="spacingAndGlyphs">29.08.2016</text>
</svg>
</body></html>
